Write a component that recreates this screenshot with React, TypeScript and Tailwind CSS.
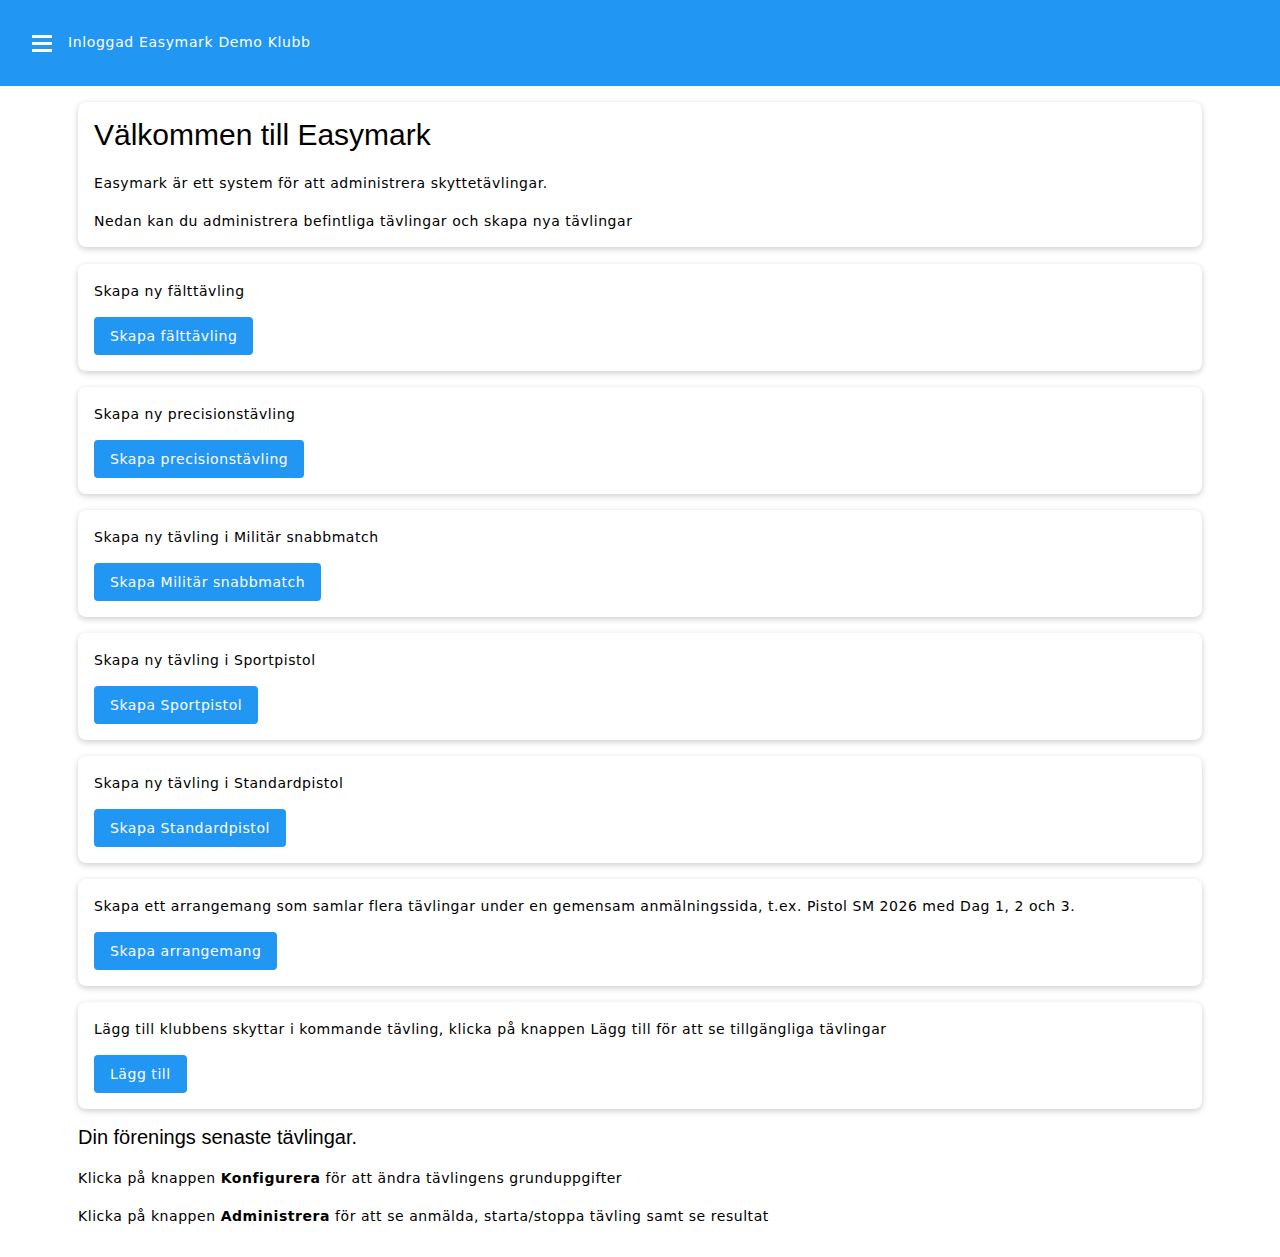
const body = { fontFamily: '"DejaVu Sans", Verdana, sans-serif' };
const head = { fontFamily: '"Liberation Sans", Arial, sans-serif' };

const sections = [
  { text: 'Skapa ny fälttävling', button: 'Skapa fälttävling' },
  { text: 'Skapa ny precisionstävling', button: 'Skapa precisionstävling' },
  { text: 'Skapa ny tävling i Militär snabbmatch', button: 'Skapa Militär snabbmatch' },
  { text: 'Skapa ny tävling i Sportpistol', button: 'Skapa Sportpistol' },
  { text: 'Skapa ny tävling i Standardpistol', button: 'Skapa Standardpistol' },
  {
    text: 'Skapa ett arrangemang som samlar flera tävlingar under en gemensam anmälningssida, t.ex. Pistol SM 2026 med Dag 1, 2 och 3.',
    button: 'Skapa arrangemang',
  },
  {
    text: 'Lägg till klubbens skyttar i kommande tävling, klicka på knappen Lägg till för att se tillgängliga tävlingar',
    button: 'Lägg till',
  },
];

function Card({ children }: { children: React.ReactNode }) {
  return (
    <div className="rounded-lg bg-white p-4 shadow-[0_2px_6px_rgba(0,0,0,0.2)]">
      {children}
    </div>
  );
}

export default function App() {
  return (
    <div className="min-h-[1257px] bg-white text-[14px] tracking-[0.55px] text-black" style={body}>
      <header className="flex h-[86px] items-center bg-[#2196f3] pl-8 text-white">
        <div className="flex w-5 flex-col gap-[4px]">
          <span className="h-[3px] w-5 bg-white" />
          <span className="h-[3px] w-5 bg-white" />
          <span className="h-[3px] w-5 bg-white" />
        </div>
        <span className="ml-4 -mt-[2px] leading-5 tracking-[0.65px]">Inloggad Easymark Demo Klubb</span>
      </header>

      <main className="mx-[78px] flex flex-col gap-4 pt-4 pb-10">
        <div className="mb-[1px]">
          <Card>
            <h1 className="text-[30px] leading-[34px] tracking-normal" style={head}>
              Välkommen till Easymark
            </h1>
            <p className="mt-[21px] leading-5">Easymark är ett system för att administrera skyttetävlingar.</p>
            <p className="mt-[18px] leading-5">Nedan kan du administrera befintliga tävlingar och skapa nya tävlingar</p>
          </Card>
        </div>

        {sections.map((s) => (
          <Card key={s.button}>
            <p className="mt-[1px] leading-5">{s.text}</p>
            <button className="mt-[16px] h-[38px] rounded bg-[#2196f3] px-4 text-white">
              {s.button}
            </button>
          </Card>
        ))}

        <div>
          <h2 className="text-[20px] leading-6 tracking-normal" style={head}>
            Din förenings senaste tävlingar.
          </h2>
          <p className="mt-[19px] leading-5">
            Klicka på knappen <b>Konfigurera</b> för att ändra tävlingens grunduppgifter
          </p>
          <p className="mt-[18px] leading-5">
            Klicka på knappen <b>Administrera</b> för att se anmälda, starta/stoppa tävling samt se resultat
          </p>
        </div>
      </main>
    </div>
  );
}
